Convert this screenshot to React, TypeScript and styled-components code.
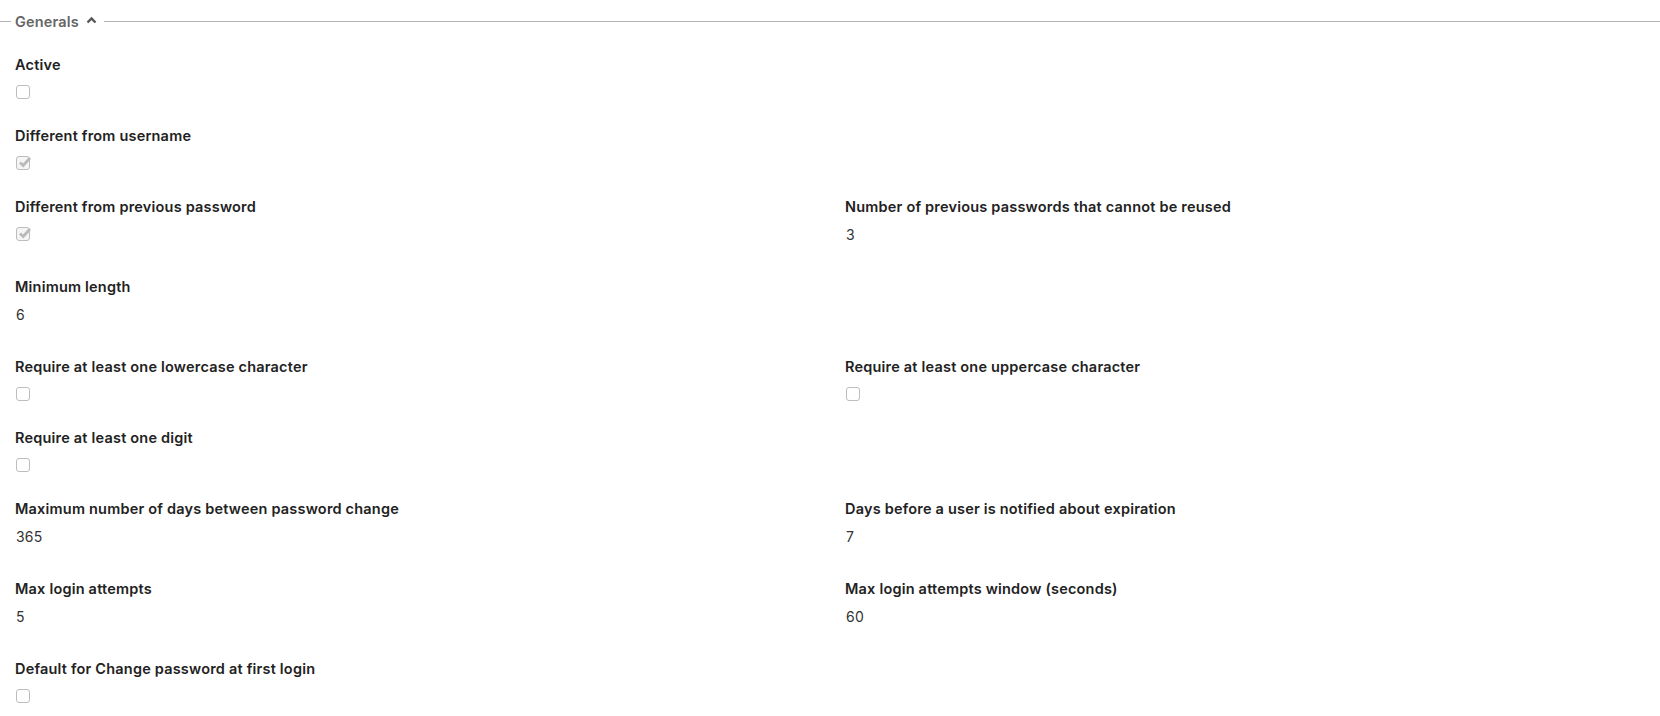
import React from 'react';
import styled, { createGlobalStyle } from 'styled-components';

const Global = createGlobalStyle`
	html, body {
		margin: 0;
		padding: 0;
		background: #fff;
	}
	body {
		font-family: Inter, "Noto Sans", "Liberation Sans", sans-serif;
		color: #222;
	}
`

const Page = styled.div`
	width: 1660px;
	padding-top: 10px;
`

const Legend = styled.div`
	display: flex;
	align-items: center;
	height: 22px;
	&::before,
	&::after {
		content: '';
		height: 1px;
		background: #b3b3b3;
		margin-top: 1px;
	}
	&::before {
		width: 11px;
		margin-right: 4px;
	}
	&::after {
		flex: 1;
		margin-left: 7px;
	}
`

const LegendText = styled.span`
	font-size: 14.5px;
	font-weight: 600;
	color: #666;
	letter-spacing: 0.15px;
`

const Chevron = styled.svg`
	width: 11px;
	height: 10px;
	margin-left: 7px;
	margin-top: -2px;
`

const Body = styled.div`
	padding: 22px 0 0 15px;
`

const Row = styled.div`
	display: grid;
	grid-template-columns: 830px 1fr;
`

const Field = styled.div`
	display: flex;
	flex-direction: column;
`

const Label = styled.div`
	font-size: 14.5px;
	font-weight: 600;
	line-height: 22px;
	color: #222;
	letter-spacing: 0.2px;
`

const Value = styled.div`
	font-size: 14px;
	line-height: 22px;
	color: #333;
	margin: 6px 0 30px 1px;
	letter-spacing: 0.2px;
`

const BoxWrap = styled.div`
	display: flex;
	height: 14px;
	margin: 9px 0 26px 1px;
`

const Box = styled.span<{ $checked?: boolean }>`
	position: relative;
	display: inline-block;
	box-sizing: border-box;
	width: 14px;
	height: 14px;
	border: 1px solid #bdbdbd;
	border-radius: 3px;
	background: ${(p) => (p.$checked ? '#f5f5f5' : '#fff')};
`

const Tick = styled.svg`
	position: absolute;
	left: 0px;
	top: -2px;
	width: 15px;
	height: 14px;
`

type Item = { label: string; checkbox?: boolean; checked?: boolean; value?: string }

const rows: Item[][] = [
	[{ label: 'Active', checkbox: true }],
	[{ label: 'Different from username', checkbox: true, checked: true }],
	[
		{ label: 'Different from previous password', checkbox: true, checked: true },
		{ label: 'Number of previous passwords that cannot be reused', value: '3' },
	],
	[{ label: 'Minimum length', value: '6' }],
	[
		{ label: 'Require at least one lowercase character', checkbox: true },
		{ label: 'Require at least one uppercase character', checkbox: true },
	],
	[{ label: 'Require at least one digit', checkbox: true }],
	[
		{ label: 'Maximum number of days between password change', value: '365' },
		{ label: 'Days before a user is notified about expiration', value: '7' },
	],
	[
		{ label: 'Max login attempts', value: '5' },
		{ label: 'Max login attempts window (seconds)', value: '60' },
	],
	[{ label: 'Default for Change password at first login', checkbox: true }],
]

function Check({ checked }: { checked?: boolean }) {
	return (
		<BoxWrap>
			<Box $checked={checked}>
				{checked && (
					<Tick viewBox="0 0 15 14">
						<path d="M3 7.5 L6.2 10.5 L13 3" fill="none" stroke="#b9b9b9" strokeWidth="2.8" />
					</Tick>
				)}
			</Box>
		</BoxWrap>
	)
}

function FieldView({ item }: { item: Item }) {
	return (
		<Field>
			<Label>{item.label}</Label>
			{item.checkbox ? <Check checked={item.checked} /> : <Value>{item.value}</Value>}
		</Field>
	)
}

export default function App() {
	return (
		<>
			<Global />
			<Page>
				<Legend>
					<LegendText>Generals</LegendText>
					<Chevron viewBox="0 0 11 10">
						<path d="M1.5 7.5 L5.5 3.5 L9.5 7.5" fill="none" stroke="#555" strokeWidth="2.4" />
					</Chevron>
				</Legend>
				<Body>
					{rows.map((r, i) => (
						<Row key={i}>
							{r.map((item, j) => (
								<FieldView key={j} item={item} />
							))}
						</Row>
					))}
				</Body>
			</Page>
		</>
	)
}
